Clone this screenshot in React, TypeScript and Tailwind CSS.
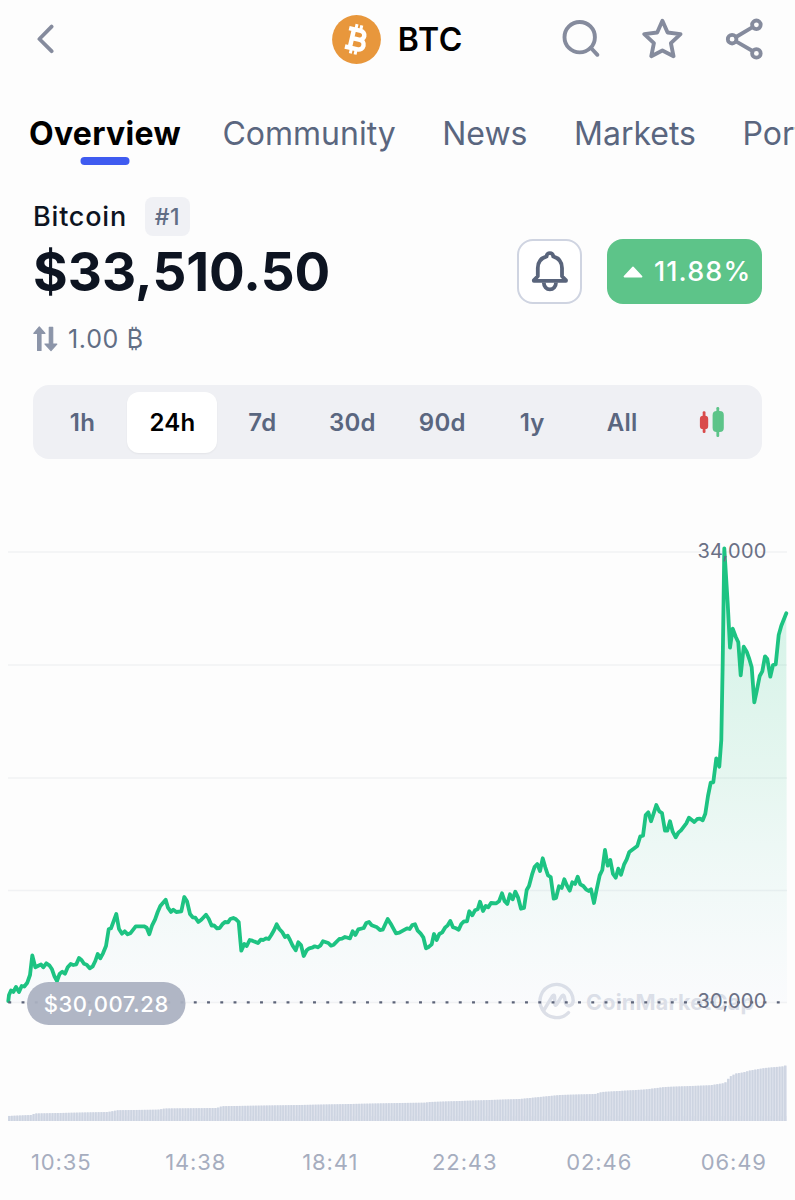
import clsx from 'clsx';

const tabs = ['Overview', 'Community', 'News', 'Markets', 'Portfolio'];
const ranges = ['1h', '24h', '7d', '30d', '90d', '1y', 'All'];
const times = ['10:35', '14:38', '18:41', '22:43', '02:46', '06:49'];

const PRICE_LINE =
  '8.3,1001 9,995 11,990.5 13.3,992 16,987 19,992 21.7,986 24.3,986.5 27.3,982.7 30,975 32.3,955.5 35.3,967.3 38.3,965.7 41,964.5 43.3,967.3 46.3,963.3 49.3,965.3 52,969.3 54.3,976 57,981 59.7,973.7 62.3,971.7 65,973.7 67.7,967.3 70.7,964 73.3,965 76.3,964.3 79,958 81.7,960.3 84,963.7 86.7,964.7 89.7,968.3 92.7,966.3 95.3,961 97.7,954 100.3,958.3 103,953.3 106,946 108.7,929.3 111,928.3 116.3,914 119,929 122,933.7 124.7,931.3 127.7,934.3 130.3,933.3 135.7,926.3 144,926.3 146.7,927.7 149.3,934.3 152,925.7 155,919.7 157.7,912 160.3,906 165.7,899.7 168,907.7 171,912 173.3,909.7 176.3,912 181.3,911.3 184.3,897 187,901.3 190,914 192.7,917.3 195.3,917.7 198.3,922 201.3,919.7 206,914.7 208.7,918.7 211.7,925.7 214,925.3 217,928.3 219.7,928 222.3,924.3 225,922 228,922.3 230.3,919 233.3,918 236,919.3 238.7,922 240.3,940 241.3,950.7 244.3,944 246.7,946 249.7,940 252.3,940.7 258,943 260.7,939.7 263.3,940 266,938.3 268.7,939 271.3,935 274,930.3 276.7,924.3 279.3,929 282.3,932.3 285,937 287.7,935.7 290,940 292.7,945.7 295.7,950.3 298.3,942.3 301,945 303.7,956 306.7,950.3 309.3,948.3 312,947.7 314.7,946.3 317.7,947.3 320.3,945.7 323,941.3 328.3,943 331,945.7 333.7,944.7 339.3,939 342,938.7 345,937 350,938.3 352.7,931.3 355.3,935 358.3,929.3 363.7,928 366.3,923 369,922 371.7,925.3 377,927.3 380,930 382.7,929.7 387.7,919 390.7,923.7 396,933.3 399.3,932.7 407,928.3 409.7,929 412.3,925 415,924.3 417.7,930.7 420.7,933.7 423.3,937.3 426,948.3 429,946.7 431.7,944.3 434,934 436.7,940 439.3,934 442.3,932.3 445,927.7 447.7,925.3 450.3,921 453,927.3 456,928.3 458.7,929.7 461.3,924 464,921.3 467,921.3 469.3,911.3 472.3,915.3 475,910.3 477.7,909.3 480,901.7 483,911 485.7,906 488.3,907.3 491,903 496.3,903.3 499,901.3 502,893.3 504.7,901.3 507.3,904 510,894.3 512.7,899.3 515.3,891.7 518,897.3 521,908.7 524,908 526.7,890 529,886 532,874.7 534.7,866.7 537.3,864 540,871 542.7,858.3 545.3,867.3 548,875.3 550.7,877 553.7,898.7 556,898 559,886.3 561.7,888 564.3,879.3 567,885.7 569.7,890.7 572.3,882.3 575,884 577.7,876.7 580.3,884.3 583.3,886 586,889.3 588.7,891 591,889.3 594,903 596.7,889.3 599.7,875.3 602.3,870 605,850 607.7,865.7 610.3,860 613,874 615.7,877.7 618.3,868.7 621,874.7 624,864.7 626.7,859.3 629.3,852 637.3,846 640.3,836.3 643,835.7 645.7,815 648.3,812.3 651,821.3 654,812.3 656.3,805 659.3,811.3 662,813 665,830.7 667.3,830.7 670,821.3 672.7,831.7 675.7,837.3 678.3,832.7 681,830.3 686.3,823.3 689,817.7 694.3,822 697.3,819 700,818.7 702.7,820.3 705.3,813.7 708,796 710.7,782.7 713.3,782.3 716.3,758.3 719.3,766.7 721.3,740 722.7,663 724.3,548.3 727.7,603.3 730,647.7 732.7,628.7 735.7,636.7 738.3,642.3 740.7,675.3 743.7,646.7 746.7,651.7 749.3,659 751.7,667.3 754.3,702.3 756.7,691 759.7,676 762.3,671.3 765,656.3 767.3,659 770.3,676.7 773,665 775.7,664.3 778.7,635 781.3,625.7 786.3,613.3';

// Top edge of the cumulative volume, interpolated into one bar per five minutes
const VOLUME_EDGE: [number, number][] = [
  [8, 1116], [31, 1115], [35, 1113.5], [108, 1112], [118, 1110.2], [158, 1109.7], [165, 1108.5],
  [217, 1108], [222, 1106.2], [300, 1105], [400, 1103], [425, 1102.7], [430, 1102], [520, 1099],
  [560, 1095], [595, 1094], [602, 1092], [645, 1089.5], [665, 1087], [710, 1085.3], [725, 1083],
  [727, 1080], [731, 1076], [736, 1073.5], [743, 1072.5], [750, 1070.5], [765, 1068], [784, 1066.3],
  [787, 1064.5],
];
const VOLUME_BASE = 1121;

function volumeTop(x: number) {
  const i = Math.max(1, VOLUME_EDGE.findIndex(([px]) => px >= x));
  const [x0, y0] = VOLUME_EDGE[i - 1];
  const [x1, y1] = VOLUME_EDGE[i];
  return y0 + ((y1 - y0) * (x - x0)) / (x1 - x0);
}

const bars = Array.from({length: 287}, (_, i) => {
  const x = 8.2 + i * 2.713;
  return {x, top: volumeTop(Math.min(x + 1, 787))};
});

function BitcoinLogo() {
  return (
    <svg className="h-[49px] w-[49px]" viewBox="0 0 49 49">
      <circle cx="24.5" cy="24.5" r="24.4" fill="#e8973c" />
      <g transform="translate(24.2 24.4) rotate(13)" fill="none" stroke="white">
        <path d="M-9.4-9.4H2.6a4.5 4.5 0 0 1 0 9H-4.4M2.6-.4H3.6a4.9 4.9 0 0 1 0 9.8H-9.4M-4.4-9.4V9.4" strokeWidth="4.5" />
        <path d="M-2.6-15v4.5M2.3-15v4.5M-2.6 10.5V15M2.3 10.5V15" strokeWidth="3" />
      </g>
    </svg>
  );
}

function Header() {
  return (
    <header className="grid h-[78px] grid-cols-[1fr_auto_1fr] items-center px-[30px]">
      <svg className="ml-[6px] h-[30px] w-[20px]" viewBox="0 0 20 30" fill="none" stroke="#858b9d" strokeWidth="3.8" strokeLinecap="round" strokeLinejoin="round">
        <path d="M15.6 2.6 3.4 15 15.6 27.2" />
      </svg>

      <div className="flex items-center gap-[17px]">
        <BitcoinLogo />
        <span className="pt-px text-[32px] font-semibold leading-10 tracking-[0.8px] text-black">BTC</span>
      </div>

      <div className="flex items-center justify-end text-[#858b9d]">
        <svg className="mr-[41px] h-[42px] w-[40px]" viewBox="0 0 40 42" fill="none" stroke="currentColor" strokeWidth="3.9" strokeLinecap="round">
          <circle cx="18.7" cy="19.2" r="15.2" />
          <path d="m30 30 6.4 6.8" />
        </svg>
        <svg className="mr-[41px] h-[42px] w-[42px]" viewBox="0 0 42 42" fill="none" stroke="currentColor" strokeWidth="3.9" strokeLinejoin="round">
          <path d="m20.4 2.8 5.2 11.7 12.9 1.6-9.6 9 2.6 13.1-11.1-5.7-11.1 5.7 2.6-13.1-9.6-9 12.9-1.6z" />
        </svg>
        <svg className="h-[42px] w-[40px]" viewBox="0 0 40 42" fill="none" stroke="currentColor" strokeWidth="3.8">
          <circle cx="7.1" cy="21.2" r="4.3" />
          <circle cx="31.4" cy="6.8" r="4.3" />
          <circle cx="31.4" cy="35.4" r="4.3" />
          <path d="m11 19 16.6-9.8M11 23.4 27.6 33" />
        </svg>
      </div>
    </header>
  );
}

function Tabs() {
  return (
    <nav className="flex h-[110px] items-center gap-[46.5px] overflow-hidden pt-[2px] pl-[29px] text-[32px] leading-10 whitespace-nowrap">
      {tabs.map((tab, i) => (
        <span
          key={tab}
          className={clsx('relative', i === 0 ? '-mr-[5px] font-bold tracking-[0.3px] text-black' : 'text-[#5a667f]')}
        >
          {tab}
          {i === 0 && (
            <span className="absolute bottom-[-11px] left-1/2 h-2 w-[49px] -translate-x-1/2 rounded-full bg-[#3f5bf0]" />
          )}
        </span>
      ))}
    </nav>
  );
}

function Summary() {
  return (
    <section className="flex h-[197px] items-start justify-between pr-[33px] pl-[33px]">
      <div>
        <div className="mt-[9px] flex h-[39px] items-center gap-[18px]">
          <h1 className="pt-px text-[27px] font-medium tracking-[0.8px] text-[#0d1421]">Bitcoin</h1>
          <span className="flex h-[39px] w-[45px] items-center justify-center rounded-lg bg-[#f0f1f5] pt-[2px] text-[23px] font-medium tracking-[0.6px] text-[#616e85]">
            #1
          </span>
        </div>
        <p className="flex h-[70px] items-center pt-[3px] text-[53px] font-bold text-[#0d1421]">$33,510.50</p>
        <p className="flex h-[66px] items-center gap-[10px] text-[25px] tracking-[0.7px] text-[#616e85]">
          <svg className="h-[26px] w-[25px]" viewBox="0 0 25 26" fill="#8c95a9" stroke="#8c95a9" strokeWidth="1.2" strokeLinejoin="round">
            <path d="M6.3 1 12 7.3H8V24.4H4.6V7.3H.8zM16.3 1.4H19.7V18H23.8L18 24.6 12 18H16.3z" />
          </svg>
          <span className="pt-[2px]">1.00 ₿</span>
        </p>
      </div>

      <div className="mt-[51px] flex gap-[25px]">
        <button className="flex h-[65px] w-[65px] items-center justify-center rounded-2xl border-2 border-[#cfd4e1] bg-white">
          <svg className="h-[42px] w-[38px]" viewBox="0 0 38 42" fill="none" stroke="#59647b" strokeWidth="3.8" strokeLinejoin="round">
            <path d="M15.6 5.4C15.6 .9 22.2 .9 22.2 5.4C27.8 7.2 31 11.2 31 17V25.2L35 29.4V29.8H2.8V29.4L6.8 25.2V17C6.8 11.2 10 7.2 15.6 5.4Z" />
            <path d="M12.8 31.6a6.1 6.8 0 0 0 12.2 0" />
          </svg>
        </button>
        <div className="flex h-[65px] w-[155px] items-center gap-[11px] rounded-2xl bg-[#5dc489] pl-4 text-[27px] font-[550] tracking-[1.1px] text-white">
          <svg className="h-3 w-5 shrink-0" viewBox="0 0 20 12" fill="white" stroke="white" strokeWidth="1.6" strokeLinejoin="round">
            <path d="M10 1.4 18.6 10.6H1.4z" />
          </svg>
          <span className="pt-[2px]">11.88%</span>
        </div>
      </div>
    </section>
  );
}

function RangePicker() {
  return (
    <div className="mr-[33px] ml-[32.5px] grid h-[74px] grid-cols-8 items-center rounded-2xl bg-[#eff0f4] px-[5px] text-[24px] font-semibold tracking-[0.2px] text-[#5a667f]">
      {ranges.map((range) => (
        <button
          key={range}
          className={clsx('h-[61px] rounded-xl pt-[2px]', range === '24h' && 'bg-white text-black shadow-xs')}
        >
          {range}
        </button>
      ))}
      <svg className="h-[32px] w-[26px] justify-self-center" viewBox="0 0 26 32">
        <rect x=".9" y="9.7" width="8.3" height="13.4" rx="3.2" fill="#d94b4b" />
        <rect x="3.7" y="5.3" width="2.8" height="21.7" rx="1.2" fill="#d94b4b" />
        <rect x="13.6" y="5" width="11.2" height="21" rx="4" fill="#5dc489" />
        <rect x="17.4" y="1" width="2.8" height="30" rx="1.2" fill="#5dc489" />
      </svg>
    </div>
  );
}

function Chart() {
  return (
    <svg className="block h-[671px] w-[795px]" viewBox="0 459 795 671">
      <defs>
        <linearGradient id="area" gradientUnits="userSpaceOnUse" x1="0" y1="548" x2="0" y2="1002">
          <stop offset="0" stopColor="#16c784" stopOpacity=".2" />
          <stop offset=".5" stopColor="#38c48f" stopOpacity=".12" />
          <stop offset=".8" stopColor="#7fd0c8" stopOpacity=".08" />
          <stop offset="1" stopColor="#c8d8f4" stopOpacity=".06" />
        </linearGradient>
      </defs>

      <path d="M8 552H787M8 665H787M8 778H787M8 890.5H787M8 1002.5H787" stroke="#f1f2f4" strokeWidth="1.4" />

      <g fill="none" stroke="#dcdfe7" strokeWidth="3.4" strokeLinecap="round" strokeLinejoin="round">
        <path d="M568.5 1012.6A16.6 16.6 0 1 1 573.2 1000.5C573.2 1006 566.4 1008 565.4 1002.4L564.4 996.8C564 994.8 562.8 994.6 561.6 996.4L556.6 1004.6C555.8 1005.8 554.8 1005.4 554.8 1004L554.6 996.6C554.6 994.8 553.4 994.6 552.4 996.2L543.4 1011" />
      </g>
      <text x="586" y="1009.5" fill="#dcdfe7" fontSize="21.5" fontWeight="700" textLength="168">
        CoinMarketCap
      </text>

      <polygon points={`${PRICE_LINE} 787,1002 8,1002`} fill="url(#area)" />
      <polyline points={PRICE_LINE} fill="none" stroke="#1dc382" strokeWidth="3.8" strokeLinecap="round" strokeLinejoin="round" />

      <path d="M8.3 1002.3H787" stroke="#5d6479" strokeWidth="2.2" strokeDasharray="2.9 10.35" />

      <g fill="#6a7085" fontSize="20" letterSpacing=".25">
        <text x="697.5" y="557.5">34,000</text>
        <text x="697.5" y="1008.3">30,000</text>
      </g>

      <rect x="27" y="982" width="158.5" height="43" rx="21.5" fill="#abb1c1" fillOpacity=".94" />
      <text x="106.3" y="1011.5" fill="white" fontSize="22" fontWeight="500" letterSpacing=".55" textAnchor="middle">
        $30,007.28
      </text>

      <rect x="8" y="1116" width="779" height="5" fill="#dfe3ec" />
      {bars.map(({x, top}) => (
        <g key={x}>
          <rect x={x} y={top} width="2.72" height={VOLUME_BASE - top} fill="#dee2ec" />
          <rect x={x} y={top} width="1.7" height={VOLUME_BASE - top} fill="#cdd4e1" />
        </g>
      ))}
    </svg>
  );
}

export default function App() {
  return (
    <main className="h-[1200px] w-[795px] overflow-hidden bg-[#fdfdfd] font-['Inter',sans-serif]">
      <Header />
      <Tabs />
      <Summary />
      <RangePicker />
      <Chart />
      <div className="-mx-[6px] grid h-[64px] grid-cols-6 items-center text-center text-[22px] tracking-[0.9px] text-[#a6adbf]">
        {times.map((time) => (
          <span key={time}>{time}</span>
        ))}
      </div>
    </main>
  );
}
